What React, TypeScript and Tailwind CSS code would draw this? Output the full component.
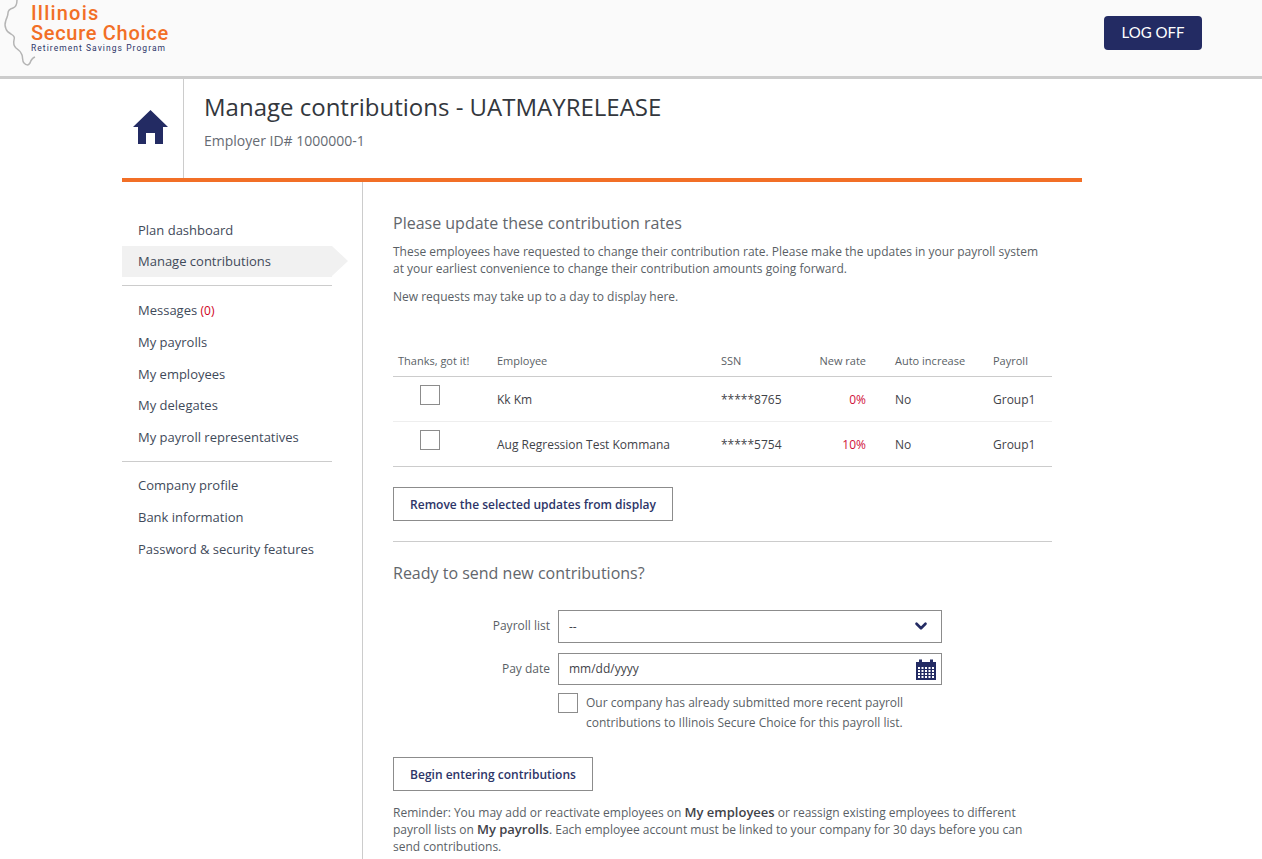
import { ChevronDown } from "lucide-react";

const navTop = ["Plan dashboard"];
const navMiddle = ["My payrolls", "My employees", "My delegates", "My payroll representatives"];
const navBottom = ["Company profile", "Bank information", "Password & security features"];

const rows = [
  { name: "Kk Km", ssn: "*****8765", rate: "0%" },
  { name: "Aug Regression Test Kommana", ssn: "*****5754", rate: "10%" },
];

function NavLink({ label, className = "" }: { label: string; className?: string }) {
  return <div className={`pl-4 text-[13px] leading-[20px] text-[#3f4a5a] ${className}`}>{label}</div>;
}

function Checkbox() {
  return <div className="h-5 w-5 border border-[#8c8c8c] bg-white" />;
}

function StateOutline() {
  return (
    <svg viewBox="0 0 40 68" className="h-[68px] w-[40px]" fill="none" stroke="#b5b5b5" strokeWidth="1.5">
      <path d="M17 0C17 4 16 7 13 8 10 9 8 10 8 13 8 16 7 17 6 20 5 23 4 25 6 29 7 32 9 33 11 34 14 36 15 37 14 40 13 44 14 46 16 48 19 50 21 52 22 55 23 58 22 61 24 63 26 65 28 66 30 63 31 60 32 58 35 57" />
    </svg>
  );
}

function CalendarIcon() {
  return (
    <svg viewBox="0 0 20 21" className="h-[21px] w-[20px]">
      <path fill="#232b63" d="M0 3h3V0.500h3V3h8V0.500h3V3h3v18H0z" />
      <g fill="#ffffff">
        {[8, 11, 14, 17].map((y) =>
          [2, 5.500, 9, 12.500, 16].map((x) => <rect key={`${x}-${y}`} x={x} y={y} width="2" height="2" />),
        )}
      </g>
    </svg>
  );
}

export default function App() {
  return (
    <div className="h-[859px] overflow-hidden bg-white font-['Open_Sans',sans-serif] text-[#5a5f66]">
      <header className="flex h-[79px] items-start justify-between border-b-[3px] border-[#cccccc] bg-[#fafafa]">
        <div className="relative h-[76px] w-[220px] overflow-hidden">
          <div className="absolute left-0 top-0">
            <StateOutline />
          </div>
          <div className="absolute left-[31px] top-[3px] font-['Roboto',sans-serif] text-[20px] leading-[20px] font-medium tracking-[0.7px] text-[#f26f26]">
            <div className="tracking-[1.2px]">Illinois</div>
            <div className="whitespace-nowrap">Secure Choice</div>
            <div className="whitespace-nowrap text-[8.500px] leading-[10px] font-normal tracking-[1.05px] text-[#2d3568]">
              Retirement Savings Program
            </div>
          </div>
        </div>
        <button className="mt-4 mr-[60px] h-[34px] w-[98px] rounded-[4px] bg-[#232b63] pb-[2px] font-['Lato',sans-serif] text-[15px] text-white">
          LOG OFF
        </button>
      </header>

      <div className="ml-[122px] w-[960px]">
        <div className="flex h-[99px]">
          <div className="flex w-[62px] items-center justify-center border-r border-[#cccccc] pr-[5px]">
            <svg viewBox="0 0 35 34" className="mt-[-4px] h-[34px] w-[35px]">
              <path fill="#232b63" d="M17.500 0 35 17H30V34H22V23H13V34H5V17H0z" />
            </svg>
          </div>
          <div className="pl-5 pt-[12px]">
            <h1 className="text-[24px] leading-[32px] text-[#33373d]">Manage contributions - UATMAYRELEASE</h1>
            <p className="mt-[8px] text-[14px] leading-[20px] text-[#666b73]">Employer ID# 1000000-1</p>
          </div>
        </div>
        <div className="h-[4px] bg-[#f26f26]" />

        <div className="flex">
          <nav className="h-[680px] w-[241px] shrink-0 border-r border-[#cccccc] pt-[38px]">
            {navTop.map((label) => (
              <NavLink key={label} label={label} />
            ))}
            <div className="relative mt-[6px] h-[31px] w-[210px] bg-[#f1f1f1]">
              <NavLink label="Manage contributions" className="pt-[5px]" />
              <div className="absolute top-0 left-full h-0 w-0 border-y-[15.500px] border-l-[16px] border-y-transparent border-l-[#f1f1f1]" />
            </div>
            <div className="mt-[8px] w-[210px] border-t border-[#cccccc]" />
            <div className="mt-[14px] pl-4 text-[13px] leading-[20px] text-[#3f4a5a]">
              Messages <span className="text-[12px] text-[#d0021b]">(0)</span>
            </div>
            <div className="mt-[11px] flex flex-col gap-[11.500px]">
              {navMiddle.map((label) => (
                <NavLink key={label} label={label} />
              ))}
            </div>
            <div className="mt-[14.500px] w-[210px] border-t border-[#cccccc]" />
            <div className="mt-[13px] flex flex-col gap-3">
              {navBottom.map((label) => (
                <NavLink key={label} label={label} />
              ))}
            </div>
          </nav>

          <main className="ml-[30px] w-[659px] pt-[30px]">
            <h2 className="text-[16px] leading-[22px] text-[#62666c]">Please update these contribution rates</h2>
            <p className="mt-[9px] text-[12px] leading-[17px]">
              These employees have requested to change their contribution rate. Please make the updates in your payroll system
              <br />
              at your earliest convenience to change their contribution amounts going forward.
            </p>
            <p className="mt-[11px] text-[12px] leading-[17px]">New requests may take up to a day to display here.</p>

            <div className="mt-[45px] flex h-[27px] items-start border-b border-[#cccccc] pt-[3px] text-[11px] leading-[15px]">
              <div className="w-[104px] pl-[5px]">Thanks, got it!</div>
              <div className="w-[224px]">Employee</div>
              <div className="w-[85px]">SSN</div>
              <div className="w-[60px] text-right">New rate</div>
              <div className="w-[127px] pl-[29px] whitespace-nowrap">Auto increase</div>
              <div>Payroll</div>
            </div>
            {rows.map((row, i) => (
              <div
                key={row.name}
                className={`flex h-[45px] items-start text-[12px] text-[#3f4349] ${i === 0 ? "border-b border-[#eeeeee]" : "border-b border-[#cccccc]"}`}
              >
                <div className="w-[104px] pt-[8px] pl-[27px]">
                  <Checkbox />
                </div>
                <div className="w-[224px] pt-[14px] leading-[17px]">{row.name}</div>
                <div className="w-[85px] pt-[14px] leading-[17px]">{row.ssn}</div>
                <div className="w-[60px] pt-[14px] text-right leading-[17px] text-[#d0103a]">{row.rate}</div>
                <div className="w-[127px] pt-[14px] pl-[29px] leading-[17px]">No</div>
                <div className="pt-[14px] leading-[17px]">Group1</div>
              </div>
            ))}

            <button className="mt-[20px] block h-[34px] w-[280px] border border-[#8c8c8c] bg-white pt-[2px] text-[12px] font-semibold text-[#2d3568]">
              Remove the selected updates from display
            </button>
            <div className="mt-[20px] border-t border-[#cccccc]" />
            <h2 className="mt-[20px] text-[16px] leading-[22px] text-[#62666c]">Ready to send new contributions?</h2>

            <div className="mt-[26px] flex items-center">
              <label className="w-[165px] pr-[8px] pb-[2px] text-right text-[12px]">Payroll list</label>
              <div className="flex h-[33px] w-[384px] items-center justify-between border border-[#8c8c8c] pr-[11px] pl-[10px] text-[12px] text-[#3f4349]">
                <span>--</span>
                <ChevronDown className="mt-[-2px] h-[18px] w-[18px] text-[#232b63]" strokeWidth={3.5} />
              </div>
            </div>
            <div className="mt-[10px] flex items-center">
              <label className="w-[165px] pr-[8px] text-right text-[12px]">Pay date</label>
              <div className="flex h-[32px] w-[384px] items-center justify-between border border-[#8c8c8c] pr-[5px] pl-[10px] text-[12px] text-[#3f4349]">
                <span>mm/dd/yyyy</span>
                <CalendarIcon />
              </div>
            </div>
            <div className="mt-[8px] ml-[165px] flex">
              <Checkbox />
              <p className="ml-[8px] text-[12px] leading-[20px]">
                Our company has already submitted more recent payroll
                <br />
                contributions to Illinois Secure Choice for this payroll list.
              </p>
            </div>

            <button className="mt-[24px] block h-[34px] w-[200px] border border-[#8c8c8c] bg-white pt-[2px] text-[12px] font-semibold text-[#2d3568]">
              Begin entering contributions
            </button>
            <p className="mt-[13px] text-[12px] leading-[17px]">
              Reminder: You may add or reactivate employees on <b className="text-[13px] font-semibold text-[#3f4349]">My employees</b> or reassign existing employees to different
              <br />
              payroll lists on <b className="text-[13px] font-semibold text-[#3f4349]">My payrolls</b>. Each employee account must be linked to your company for 30 days before you can
              <br />
              send contributions.
            </p>
          </main>
        </div>
      </div>
    </div>
  );
}
